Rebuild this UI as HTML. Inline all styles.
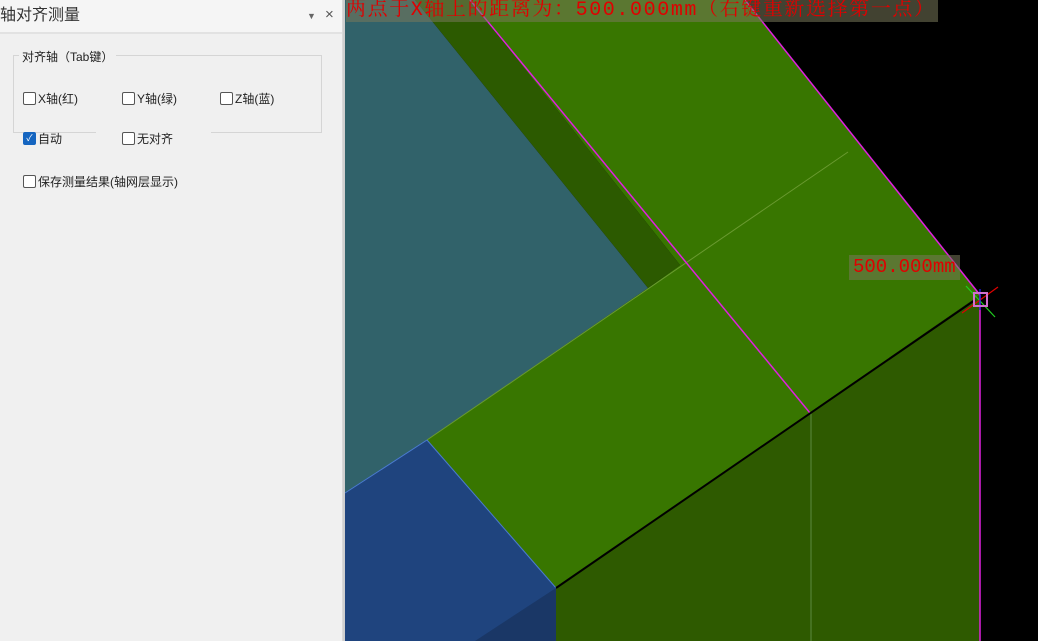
<!DOCTYPE html>
<html><head><meta charset="utf-8"><style>
body{margin:0;width:1038px;height:641px;overflow:hidden;position:relative;background:#000;font-family:"Liberation Sans","Noto Sans CJK SC",sans-serif}
#panel{position:absolute;left:0;top:0;width:342px;height:641px;background:#f0f0f0;border-right:1px solid #d8d8d8}
#title{position:absolute;left:0;top:0;width:342px;height:32px;background:#f5f5f5;border-bottom:2px solid #e2e2e2;font-size:16px;color:#333;line-height:32px}
.t{position:absolute;font-size:12px;color:#222;white-space:nowrap}
.cb{position:absolute;width:11px;height:11px;border:1px solid #555;border-radius:2px;background:#fff}
#grp{position:absolute;left:13px;top:55px;width:307px;height:76px;border:1px solid #d5d5d5}
svg{position:absolute;left:0;top:0}
.lbl{position:absolute;color:#e00000;font-family:"Liberation Mono","Noto Serif CJK SC",monospace;white-space:nowrap;background:rgba(120,120,90,.55)}
</style></head><body>
<svg width="1038" height="641">
<rect x="343" y="0" width="695" height="641" fill="#000"/>
<polygon points="345,0 415,0 648,288 427,440 345,493" fill="#31626a"/>
<polygon points="345,493 427,440 556,588 530,641 345,641" fill="#1f447e"/>
<polygon points="475,641 556,588 556,641" fill="#1a3766"/>
<polygon points="470,0 745,0 980,295 556,588 427,440 648,288 680,265" fill="#387600"/>
<polygon points="415,0 470,0 680,265 648,288" fill="#2c5a00"/>
<polygon points="556,588 980,295 980,641 556,641" fill="#2e5a00"/>
<line x1="427" y1="440" x2="848" y2="152" stroke="#6a9a30" stroke-width="1"/>
<line x1="811" y1="413" x2="811" y2="641" stroke="#5c8a40" stroke-width="1"/>
<line x1="345" y1="493" x2="427" y2="440" stroke="#4a7ad0" stroke-width="1"/>
<line x1="427" y1="440" x2="556" y2="588" stroke="#4a7ad0" stroke-width="1"/>
<line x1="470" y1="0" x2="810" y2="413" stroke="#e020e0" stroke-width="1.5"/>
<line x1="745" y1="0" x2="980" y2="295" stroke="#e020e0" stroke-width="1.5"/>
<line x1="980" y1="295" x2="980" y2="641" stroke="#e020e0" stroke-width="1.5"/>
<line x1="556" y1="588" x2="975" y2="300" stroke="#000" stroke-width="2"/>
<line x1="966" y1="286" x2="995" y2="317" stroke="#20d020" stroke-width="1.2"/>
<line x1="962" y1="313" x2="998" y2="287" stroke="#e00000" stroke-width="1.2"/>
<line x1="980" y1="289" x2="980" y2="310" stroke="#2020ff" stroke-width="1.2"/>
<rect x="974" y="293" width="13" height="13" fill="none" stroke="#d070d0" stroke-width="2"/>
<rect x="343" y="0" width="2" height="641" fill="#cfcfcf"/>
</svg>
<div class="lbl" style="left:346px;top:0;font-size:20px;line-height:22px;letter-spacing:1.6px;padding-right:2px">两点于X轴上的距离为：500.000mm（右键重新选择第一点）</div>
<div class="lbl" style="left:849px;top:255px;font-size:19px;line-height:25px;padding:0 4px 0 4px">500.000mm</div>
<div id="panel">
<div id="title">轴对齐测量<span style="position:absolute;left:307px;top:0;font-size:9px;color:#666">▼</span><span style="position:absolute;left:325px;top:-1px;font-size:15px;color:#555">×</span></div>
<div id="grp"></div>
<div class="t" style="left:19px;top:48px;background:#f0f0f0;padding:0 3px">对齐轴（Tab键）</div>
<div class="cb" style="left:23px;top:92px"></div><div class="t" style="left:38px;top:90px">X轴(红)</div>
<div class="cb" style="left:122px;top:92px"></div><div class="t" style="left:137px;top:90px">Y轴(绿)</div>
<div class="cb" style="left:220px;top:92px"></div><div class="t" style="left:235px;top:90px">Z轴(蓝)</div>
<div style="position:absolute;left:96px;top:128px;width:115px;height:6px;background:#f0f0f0"></div>
<div class="cb" style="left:23px;top:132px;background:#1565c0;border-color:#1565c0;color:#fff;font-size:9px;line-height:11px;text-align:center">✓</div><div class="t" style="left:38px;top:130px">自动</div>
<div class="cb" style="left:122px;top:132px"></div><div class="t" style="left:137px;top:130px">无对齐</div>
<div class="cb" style="left:23px;top:175px"></div><div class="t" style="left:38px;top:173px">保存测量结果(轴网层显示)</div>
</div>
</body></html>
